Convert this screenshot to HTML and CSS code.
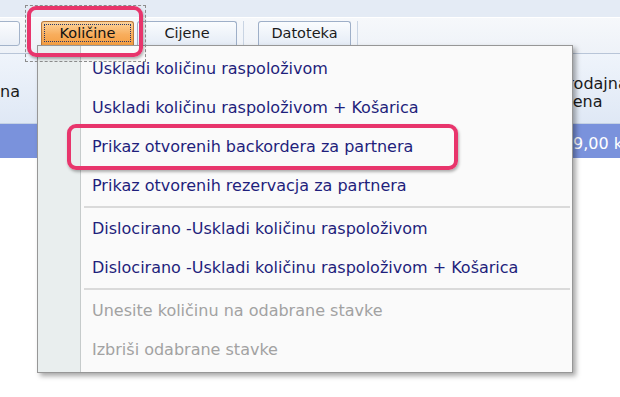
FILE: index.html
```html
<!DOCTYPE html>
<html lang="hr">
<head>
    <meta charset="UTF-8">
    <meta name="viewport" content="width=device-width, initial-scale=1.0">
    <title>Količine</title>
    <link rel="stylesheet" href="styles.css">
</head>
<body>
    <div class="window">
        <div class="top-strip"></div>
        <div class="tab-bar">
            <div class="btn-stub"></div>
            <div class="tab active">Količine</div>
            <div class="tab tab-cijene">Cijene</div>
            <div class="tab-sep"></div>
            <div class="tab tab-datoteka">Datoteka</div>
            <div class="tab-sep"></div>
        </div>
        <div class="grid-head">
            <div class="head-cell head-left">na</div>
            <div class="head-cell head-mid"></div>
            <div class="head-cell head-right">
                <span class="head-line">Prodajna</span>
                <span class="head-line second">cijena</span>
            </div>
        </div>
        <div class="grid-row">
            <div class="row-cell row-left"></div>
            <div class="row-cell row-mid"></div>
            <div class="row-cell row-right">9,00 kn</div>
        </div>

        <!-- dropdown of the Količine tab -->
        <div class="menu">
            <div class="menu-gutter"></div>
            <div class="menu-list">
                <div class="menu-item">Uskladi količinu raspoloživom</div>
                <div class="menu-item">Uskladi količinu raspoloživom + Košarica</div>
                <div class="menu-item">Prikaz otvorenih backordera za partnera</div>
                <div class="menu-item">Prikaz otvorenih rezervacja za partnera</div>
                <div class="menu-sep"></div>
                <div class="menu-item">Dislocirano -Uskladi količinu raspoloživom</div>
                <div class="menu-item">Dislocirano -Uskladi količinu raspoloživom + Košarica</div>
                <div class="menu-sep"></div>
                <div class="menu-item disabled">Unesite količinu na odabrane stavke</div>
                <div class="menu-item disabled">Izbriši odabrane stavke</div>
            </div>
        </div>

        <!-- annotation marks -->
        <div class="focus-rect"></div>
        <div class="mark mark-tab"></div>
        <div class="mark mark-item"></div>
    </div>
</body>
</html>
```

FILE: styles.css
```css
body {
    margin: 0;
    background-color: #ffffff;
    font-family: "DejaVu Sans", Verdana, sans-serif;
}
.window {
    position: relative;
    width: 620px;
    height: 397px;
    overflow: hidden;
    background-color: #ffffff;
}
.top-strip {
    height: 17px;
    background-color: #e4ebf5;
    border-bottom: 1px solid #ffffff;
}
.tab-bar {
    display: flex;
    align-items: flex-start;
    height: 36px;
    padding-top: 3px;
    box-sizing: border-box;
    background: linear-gradient(#f6f8fb, #eef2f8);
    border-bottom: 1px solid #b8c5d8;
}
.btn-stub {
    width: 22px;
    height: 23px;
    margin-left: -4px;
    border: 1px solid #a3b3ca;
    border-radius: 3px;
    background: linear-gradient(#fbfcfe, #e9eef6);
}
.tab {
    height: 24px;
    box-sizing: border-box;
    border: 1px solid #9eafc8;
    border-bottom: none;
    border-radius: 3px 3px 0 0;
    background: linear-gradient(#fafcfe, #e5ecf6);
    color: #1b1b1b;
    font-size: 14.5px;
    line-height: 23px;
    text-align: center;
}
.tab.active {
    width: 93px;
    margin-left: 21px;
    border-color: #b9783a;
    background: linear-gradient(#fdd39a, #f8ad5c 55%, #f59f42);
    color: #111111;
    outline: 1px dotted #27386a;
    outline-offset: -4px;
}
.tab-cijene {
    width: 100px;
    margin-left: 3px;
}
.tab-datoteka {
    width: 93px;
    margin-left: 14px;
}
.tab-sep {
    width: 1px;
    height: 30px;
    margin-left: 6px;
    background-color: #c9d4e3;
}
.grid-head {
    display: flex;
    height: 69px;
    background: linear-gradient(#eff4fb, #dfe8f5);
    border-bottom: 1px solid #c5d2e4;
    color: #1a1a1a;
    font-size: 16px;
}
.head-cell {
    display: flex;
    align-items: center;
    line-height: 18px;
}
.head-left {
    width: 37px;
    padding-top: 6px;
}
.head-mid {
    flex: 1;
}
.head-right {
    width: 62px;
    flex-direction: column;
    align-items: flex-start;
    justify-content: center;
    padding-top: 8px;
    white-space: nowrap;
}
.head-line.second {
    margin-left: -3px;
}
.grid-row {
    display: flex;
    height: 34px;
    background-color: #7a92dc;
    color: #ffffff;
    font-size: 16px;
}
.row-cell {
    display: flex;
    align-items: flex-end;
    padding-bottom: 5px;
}
.row-left {
    width: 37px;
}
.row-mid {
    flex: 1;
}
.row-right {
    width: 62px;
    box-sizing: border-box;
    padding-left: 15px;
    white-space: nowrap;
}
.menu {
    position: absolute;
    left: 37px;
    top: 45px;
    width: 534px;
    display: flex;
    border: 1px solid #979797;
    background-color: #fafafa;
    box-shadow: 3px 3px 5px rgba(0, 0, 0, 0.35);
}
.menu-gutter {
    width: 42px;
    flex-shrink: 0;
    background-color: #e9eeee;
    border-right: 1px solid #c6cbcb;
}
.menu-list {
    flex: 1;
    padding: 3px 0;
}
.menu-item {
    height: 39px;
    line-height: 39px;
    padding-left: 11px;
    color: #1f1f7c;
    font-size: 16px;
    white-space: nowrap;
}
.menu-item.disabled {
    color: #a2a2a2;
}
.menu-sep {
    height: 2px;
    margin: 1px 2px 1px 3px;
    background-color: #dadada;
}
.focus-rect {
    position: absolute;
    left: 25px;
    top: 5px;
    width: 119px;
    height: 55px;
    border: 1px dashed #8d8d8d;
}
.mark {
    position: absolute;
    box-sizing: border-box;
    border: 4px solid #e8356c;
    border-radius: 9px;
    box-shadow: 1px 2px 3px rgba(0, 0, 0, 0.3);
}
.mark-tab {
    left: 27px;
    top: 6px;
    width: 116px;
    height: 51px;
}
.mark-item {
    left: 67px;
    top: 124px;
    width: 391px;
    height: 46px;
}
```
